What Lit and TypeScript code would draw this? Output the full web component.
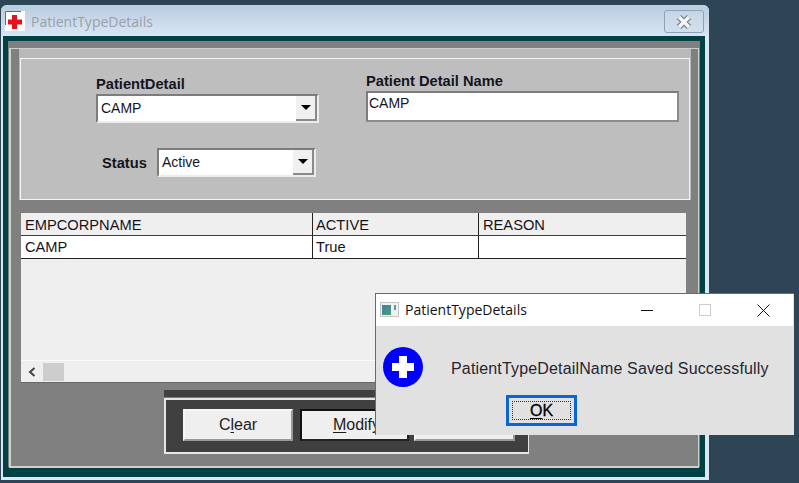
import { LitElement, css, html } from "lit";
import { customElement } from "lit/decorators.js";

const columns = ["EMPCORPNAME", "ACTIVE", "REASON"];
const rows = [["CAMP", "True", ""]];

@customElement("app-root")
export class AppRoot extends LitElement {
  static styles = css`
    :host {
      display: block;
      position: relative;
      width: 799px;
      height: 483px;
      overflow: hidden;
      box-sizing: border-box;
      padding: 5px 0 0 1px;
      background: #2e4556;
      font-family: "Liberation Sans", Arial, sans-serif;
      color: #14141c;
    }
    * {
      box-sizing: border-box;
    }

    .window {
      width: 708px;
      height: 475px;
      padding: 0 4px 3px 2px;
      border-radius: 6px 6px 0 0;
      background: #dbe7f3;
      display: flex;
      flex-direction: column;
    }
    .titlebar {
      height: 31px;
      flex: none;
      margin: 0 -4px 0 -2px;
      padding: 5px 5px 0 4px;
      display: flex;
      align-items: flex-start;
      border-radius: 6px 6px 0 0;
      border-top: 1px solid #c9d3dd;
      background: linear-gradient(#bccde0, #d8e5f3);
    }
    .app-icon {
      width: 20px;
      height: 20px;
      display: block;
      flex: none;
    }
    .window-title {
      margin-left: 6px;
      font: 14px/21px "Open Sans", sans-serif;
      color: #98a1a9;
    }
    .close-btn {
      margin-left: auto;
      width: 40px;
      height: 23px;
      margin-top: -1px;
      border: 1px solid #8da2b8;
      border-radius: 3px;
      background: linear-gradient(#c6d4e4, #d3e0ee);
      display: flex;
      align-items: center;
      justify-content: center;
    }

    .frame {
      flex: 1;
      border: solid #004243;
      border-width: 5px 5px 10px;
      background: #808080;
      padding: 7px 1px 0;
      display: flex;
    }
    .raised {
      flex: 1;
      border: 1px solid #cfcfcf;
      border-left-width: 2px;
      border-bottom-width: 2px;
      margin-bottom: -1px;
    }

    .top-panel {
      margin: 0 7px 0 8px;
      padding: 9px 1px 0;
      background: #b9b9b9;
    }
    .form {
      height: 142px;
      border: 1px solid #f4f4f4;
      background: #bebebe;
      padding: 15px 0 0 75px;
      display: flex;
      gap: 47px;
    }
    .form-left {
      width: 223px;
      padding-top: 3px;
    }
    .form-right {
      width: 313px;
    }
    .label {
      font-size: 14.67px;
      font-weight: bold;
      line-height: 15px;
      height: 17px;
      color: #15151d;
    }
    .field {
      border: solid;
      border-color: #7c7c7c #ececec #ececec #7c7c7c;
      background: #fff;
      font-size: 14px;
      display: flex;
    }
    .select {
      height: 29px;
      border-width: 2px;
    }
    .select .value {
      flex: 1;
      padding-left: 3px;
      line-height: 24px;
    }
    .arrow {
      width: 21px;
      background: #f0f0f0;
      border: solid #8a8a8a;
      border-width: 0 2px 2px 0;
      display: flex;
      align-items: center;
      justify-content: center;
    }
    .arrow::before {
      content: "";
      border: 5px solid transparent;
      border-top: 5px solid #000;
      border-bottom: 0;
    }
    .status-row {
      margin: 25px 0 0 6px;
      display: flex;
      align-items: center;
    }
    .status-row .label {
      width: 55px;
      height: 15px;
      margin-top: 2px;
    }
    .status-row .select {
      width: 159px;
    }
    .text-input {
      height: 31px;
      border-width: 2px;
      border-color: #7c7c7c #8c8c8c #8c8c8c #7c7c7c;
      padding: 0 0 0 1px;
      line-height: 20px;
    }

    .table {
      margin: 13px 0 0 10px;
      width: 665px;
      height: 170px;
      background: #efefef;
      border-bottom: 1px solid #666;
      display: flex;
      flex-direction: column;
      font-size: 14.67px;
    }
    .tr {
      display: grid;
      grid-template-columns: 292px 166px 207px;
      grid-template-rows: 23px;
      height: 23px;
      flex: none;
    }
    .tc {
      padding-left: 4px;
      line-height: 22px;
      border-right: 1px solid #222;
      border-bottom: 1px solid #222;
      white-space: nowrap;
    }
    .tc:nth-child(2) {
      padding-left: 3px;
    }
    .tc:last-child {
      border-right: 0;
    }
    .tr.head .tc {
      padding-top: 1px;
      border-bottom-color: #3c3c3c;
    }
    .tr.body .tc {
      background: #fff;
    }
    .table-rest {
      flex: 1;
    }
    .hscroll {
      height: 22px;
      flex: none;
      border-top: 1px solid #fafafa;
      display: flex;
      align-items: center;
      padding-left: 6px;
    }
    .hscroll svg {
      display: block;
    }
    .thumb {
      width: 21px;
      height: 18px;
      margin-left: 6px;
      background: #cdcdcd;
    }

    .buttons {
      margin: 7px 0 0 153px;
      width: 365px;
    }
    .strip {
      height: 7px;
      background: #404040;
    }
    .button-box {
      height: 56px;
      margin-top: 1px;
      border: 2px solid #e6e6e6;
      border-right-width: 1px;
      background: #404040;
      padding: 9px 0 0 17px;
      display: flex;
    }
    .btn {
      height: 32px;
      border: 2px solid;
      border-color: #f6f6f6 #9a9a9a #9a9a9a #f6f6f6;
      background: #efefef;
      font-size: 16px;
      line-height: 28px;
      text-align: center;
      color: #1c1c24;
    }
    .btn u {
      text-underline-offset: 2px;
    }
    .btn.clear {
      width: 110px;
      margin-right: 7px;
    }
    .btn.modify {
      width: 109px;
      margin-right: 5px;
      border-color: #111 #222 #222 #111;
      outline: 1px solid #f0f0f0;
      outline-offset: -3px;
      padding-left: 4px;
    }
    .btn.third {
      width: 101px;
    }

    .dialog {
      position: absolute;
      left: 375px;
      top: 293px;
      width: 419px;
      height: 142px;
      border: solid #6a6a6a;
      border-width: 1px 0 0 1px;
      background: #e1e1e1;
    }
    .dialog-title {
      height: 32px;
      margin-right: 1px;
      background: #fff;
      display: flex;
      align-items: center;
      padding: 0 1px 0 4px;
    }
    .dialog-icon {
      display: block;
      flex: none;
    }
    .dialog-name {
      margin-left: 5px;
      font: 14px/20px "Open Sans", sans-serif;
      color: #111;
    }
    .ctrl {
      width: 58px;
      height: 32px;
      display: flex;
      align-items: center;
      justify-content: center;
    }
    .ctrl.first {
      margin-left: auto;
    }
    .dialog-row {
      padding: 21px 0 0 7px;
      display: flex;
      align-items: center;
      gap: 28px;
    }
    .info-icon {
      display: block;
      flex: none;
    }
    .message {
      padding-top: 4px;
      font-size: 16px;
      letter-spacing: 0.16px;
      color: #26262e;
      white-space: nowrap;
    }
    .ok-btn {
      margin: 8px 0 0 130px;
      width: 71px;
      height: 31px;
      border: 3px solid #0a66d2;
      padding: 3px;
      background: #e1e1e1;
    }
    .ok-inner {
      height: 100%;
      border: 1px dotted #333;
      font-size: 16px;
      font-weight: normal;
      line-height: 18px;
      text-align: center;
      color: #000;
      -webkit-text-stroke: 0.3px #000;
    }
    .ok-inner u {
      text-underline-offset: 2px;
    }
  `;

  private closeGlyph() {
    return html`<svg width="18" height="16" viewBox="0 0 18 16">
      <path d="M4 3 14 13M14 3 4 13" stroke="#727e8a" stroke-width="6" />
      <path d="M4 3 14 13M14 3 4 13" stroke="#f4f6f8" stroke-width="3.500" />
    </svg>`;
  }

  private renderDialog() {
    return html`
      <div class="dialog">
        <div class="dialog-title">
          <svg class="dialog-icon" width="20" height="16" viewBox="0 0 20 16">
            <defs>
              <linearGradient id="pane" x1="0" y1="0" x2="1" y2="1">
                <stop offset="0" stop-color="#3d7fa8" />
                <stop offset="1" stop-color="#4f9d72" />
              </linearGradient>
            </defs>
            <rect x="0.5" y="0.5" width="18" height="14" fill="#f1f1f1" stroke="#c4c4c4" />
            <rect x="2" y="3" width="9" height="10" fill="url(#pane)" />
            <rect x="14" y="3" width="2" height="5" fill="#5f9a94" />
          </svg>
          <span class="dialog-name">PatientTypeDetails</span>
          <span class="ctrl first">
            <svg width="12" height="12" viewBox="0 0 12 12"><path d="M0 6.500H12" stroke="#111" /></svg>
          </span>
          <span class="ctrl">
            <svg width="12" height="12" viewBox="0 0 12 12"><rect x="0.5" y="0.5" width="11" height="11" fill="none" stroke="#cdcdcd" /></svg>
          </span>
          <span class="ctrl">
            <svg width="13" height="13" viewBox="0 0 13 13"><path d="M0.5 0.5 12.500 12.500M12.500 0.5 0.5 12.500" stroke="#111" /></svg>
          </span>
        </div>
        <div class="dialog-row">
          <svg class="info-icon" width="40" height="40" viewBox="0 0 40 40">
            <circle cx="20" cy="20" r="20" fill="#0000ff" />
            <path d="M16 9h8v7h7v8h-7v7h-8v-7H9v-8h7z" fill="#fff" />
          </svg>
          <span class="message">PatientTypeDetailName Saved Successfully</span>
        </div>
        <div class="ok-btn"><div class="ok-inner"><u>O</u>K</div></div>
      </div>
    `;
  }

  render() {
    return html`
      <div class="window">
        <div class="titlebar">
          <svg class="app-icon" viewBox="0 0 20 20">
            <rect width="20" height="20" fill="#fff" />
            <path d="M0.5 14V0.5H16" fill="none" stroke="#4a6f9c" />
            <path d="M7 4h5v4.500h5v5h-5V18H7v-4.500H3v-5h4z" fill="#e0141c" />
          </svg>
          <span class="window-title">PatientTypeDetails</span>
          <div class="close-btn">${this.closeGlyph()}</div>
        </div>
        <div class="frame">
          <div class="raised">
            <div class="top-panel">
              <div class="form">
                <div class="form-left">
                  <div class="label">PatientDetail</div>
                  <div class="field select">
                    <span class="value">CAMP</span><span class="arrow"></span>
                  </div>
                  <div class="status-row">
                    <div class="label">Status</div>
                    <div class="field select">
                      <span class="value">Active</span><span class="arrow"></span>
                    </div>
                  </div>
                </div>
                <div class="form-right">
                  <div class="label">Patient Detail Name</div>
                  <div class="field text-input">CAMP</div>
                </div>
              </div>
            </div>

            <div class="table">
              <div class="tr head">
                ${columns.map((c) => html`<div class="tc">${c}</div>`)}
              </div>
              ${rows.map(
                (r) => html`<div class="tr body">
                  ${r.map((c) => html`<div class="tc">${c}</div>`)}
                </div>`
              )}
              <div class="table-rest"></div>
              <div class="hscroll">
                <svg width="10" height="12" viewBox="0 0 10 12">
                  <path d="M7.500 2 3 6l4.500 4" fill="none" stroke="#444" stroke-width="2" />
                </svg>
                <div class="thumb"></div>
              </div>
            </div>

            <div class="buttons">
              <div class="strip"></div>
              <div class="button-box">
                <div class="btn clear">C<u>l</u>ear</div>
                <div class="btn modify"><u>M</u>odify</div>
                <div class="btn third"></div>
              </div>
            </div>
          </div>
        </div>
      </div>
      ${this.renderDialog()}
    `;
  }
}
